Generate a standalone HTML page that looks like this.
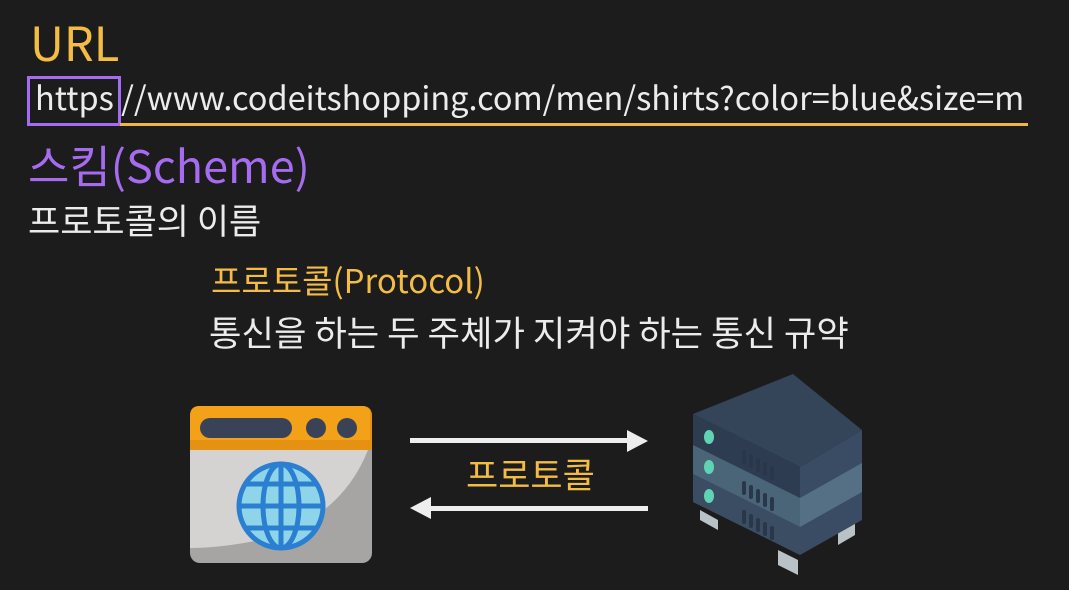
<!DOCTYPE html>
<html><head><meta charset="utf-8"><style>
body{margin:0;width:1069px;height:590px;background:#1c1c1c;overflow:hidden;position:relative;font-family:"Noto Sans CJK KR","Liberation Sans",sans-serif;}
.t{position:absolute;line-height:1;white-space:nowrap;font-weight:400;}
</style></head><body>
<div class="t" style="left:30px;top:17px;font-size:47px;color:#f3bc45;">URL</div>
<div class="t" style="left:35px;top:81px;font-size:32.5px;color:#ececec;">https //www.codeitshopping.com/men/shirts?color=blue&amp;size=m</div>
<div style="position:absolute;left:27px;top:76px;width:88px;height:44px;border:3px solid #a66cf0;"></div>
<div style="position:absolute;left:120px;top:123px;width:908px;height:3px;background:#f0b841;"></div>
<div class="t" style="left:28px;top:141px;font-size:45px;color:#a66cf0;">스킴(Scheme)</div>
<div class="t" style="left:28px;top:202px;font-size:35px;color:#ececec;">프로토콜의 이름</div>
<div class="t" style="left:211px;top:263px;font-size:33px;color:#f3bc45;">프로토콜(Protocol)</div>
<div class="t" style="left:209px;top:314px;font-size:35.3px;color:#ececec;">통신을 하는 두 주체가 지켜야 하는 통신 규약</div>
<div class="t" style="left:466px;top:456px;font-size:35px;color:#f3bc45;">프로토콜</div>
<svg style="position:absolute;left:0;top:0" width="1069" height="590">
<rect x="410" y="438" width="222" height="5" fill="#eee"/>
<polygon points="627,430 648,441 627,452" fill="#eee"/>
<rect x="428" y="506" width="220" height="5" fill="#eee"/>
<polygon points="431,497 410,508 431,519" fill="#eee"/>
<rect x="190" y="406" width="182" height="157" rx="10" fill="#a6a5a4"/>
<path d="M190 450 H368 Q340 520 260 540 Q220 548 190 548 Z" fill="#d4d3d2"/>
<path d="M200 406 H362 Q372 406 372 416 V450 H190 V416 Q190 406 200 406 Z" fill="#e59213"/>
<path d="M200 406 H362 Q368 406 370 412 L370 440 H190 V416 Q190 406 200 406 Z" fill="#f4a11a"/>
<rect x="200" y="418" width="92" height="20" rx="10" fill="#3a4258"/>
<ellipse cx="316" cy="428" rx="10" ry="10" fill="#3a4258"/>
<ellipse cx="347" cy="428" rx="10" ry="10" fill="#3a4258"/>
<ellipse cx="281" cy="506" rx="42" ry="42" fill="#8fd5ea" stroke="#2b7fd0" stroke-width="5"/>
<ellipse cx="281" cy="506" rx="18" ry="42" fill="none" stroke="#2b7fd0" stroke-width="5"/>
<line x1="281" y1="464" x2="281" y2="548" stroke="#2b7fd0" stroke-width="5"/>
<line x1="239" y1="506" x2="323" y2="506" stroke="#2b7fd0" stroke-width="5"/>
<line x1="246" y1="484" x2="316" y2="484" stroke="#2b7fd0" stroke-width="5"/>
<line x1="246" y1="528" x2="316" y2="528" stroke="#2b7fd0" stroke-width="5"/>
<polygon points="700,510 718,520 718,530 700,520" fill="#b9c2c6"/>
<polygon points="778,550 798,560 798,575 778,565" fill="#b9c2c6"/>
<polygon points="838,530 855,520 855,535 838,545" fill="#b9c2c6"/>
<polygon points="693,414 793,374 862,430 800,467" fill="#344459"/>
<polygon points="693,414 800,467 800,555 693,502" fill="#2e3c52"/>
<polygon points="800,467 862,430 862,520 800,555" fill="#3a4c63"/>
<polygon points="693,445 800,498 800,527 693,474" fill="#4a6478"/>
<polygon points="800,498 862,463 862,492 800,527" fill="#557084"/>
<polygon points="693,474 800,527 800,555 693,502" fill="#3a4d63"/>
<ellipse cx="709" cy="437" rx="5" ry="7" fill="#5fd3b4"/>
<ellipse cx="709" cy="467" rx="5" ry="7" fill="#5fd3b4"/>
<ellipse cx="709" cy="496" rx="5" ry="7" fill="#5fd3b4"/>
<g fill="#2a374a">
<rect x="742" y="450" width="4" height="14" rx="2"/><rect x="749" y="454" width="4" height="14" rx="2"/><rect x="756" y="458" width="4" height="14" rx="2"/><rect x="763" y="462" width="4" height="14" rx="2"/><rect x="770" y="466" width="4" height="14" rx="2"/>
<rect x="742" y="481" width="4" height="14" rx="2"/><rect x="749" y="485" width="4" height="14" rx="2"/><rect x="756" y="489" width="4" height="14" rx="2"/><rect x="763" y="493" width="4" height="14" rx="2"/><rect x="770" y="497" width="4" height="14" rx="2"/>
<rect x="742" y="510" width="4" height="14" rx="2"/><rect x="749" y="514" width="4" height="14" rx="2"/><rect x="756" y="518" width="4" height="14" rx="2"/><rect x="763" y="522" width="4" height="14" rx="2"/><rect x="770" y="526" width="4" height="14" rx="2"/>
</g>
</svg>
</body></html>
